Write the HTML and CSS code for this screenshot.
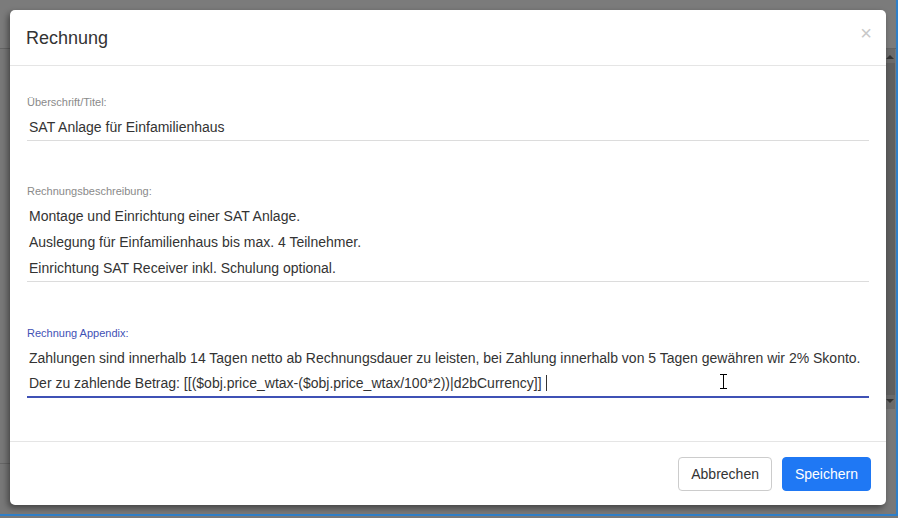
FILE: index.html
```html
<!DOCTYPE html>
<html lang="de">
<head>
<meta charset="utf-8">
<title>Rechnung</title>
<link rel="stylesheet" href="styles.css">
</head>
<body>
<div class="page">
  <div class="page-top"></div>
  <div class="page-main">
    <div class="page-content"></div>
    <div class="scrollbar">
      <div class="sb-arrow sb-up"></div>
      <div class="sb-thumb"></div>
      <div class="sb-arrow sb-down"></div>
    </div>
  </div>
</div>

<div class="modal">
  <div class="modal-header">
    <h4 class="modal-title">Rechnung</h4>
    <span class="close">&times;</span>
  </div>
  <div class="modal-body">
    <div class="field">
      <label class="field-label">Überschrift/Titel:</label>
      <div class="field-input">
        <div class="line">SAT Anlage für Einfamilienhaus</div>
      </div>
    </div>
    <div class="field">
      <label class="field-label">Rechnungsbeschreibung:</label>
      <div class="field-input">
        <div class="line">Montage und Einrichtung einer SAT Anlage.</div>
        <div class="line">Auslegung für Einfamilienhaus bis max. 4 Teilnehmer.</div>
        <div class="line">Einrichtung SAT Receiver inkl. Schulung optional.</div>
      </div>
    </div>
    <div class="field focused">
      <label class="field-label">Rechnung Appendix:</label>
      <div class="field-input">
        <div class="line">Zahlungen sind innerhalb 14 Tagen netto ab Rechnungsdauer zu leisten, bei Zahlung innerhalb von 5 Tagen gewähren wir 2% Skonto.</div>
        <div class="line">Der zu zahlende Betrag: [[($obj.price_wtax-($obj.price_wtax/100*2))|d2bCurrency]]<span class="caret"></span></div>
      </div>
      <svg class="ibeam" width="9" height="15" viewBox="0 0 9 15"><path d="M1 0.5h7M4.5 0.5v14M1 14.5h7" stroke="#000" stroke-width="1" fill="none"/></svg>
    </div>
  </div>
  <div class="modal-footer">
    <button class="btn btn-default">Abbrechen</button>
    <button class="btn btn-primary">Speichern</button>
  </div>
</div>
</body>
</html>
```
FILE: styles.css
```css
html, body {
  margin: 0;
  padding: 0;
}
body {
  width: 898px;
  height: 518px;
  overflow: hidden;
  background: #787878;
  font-family: "Liberation Sans", Arial, sans-serif;
  position: relative;
}
.page {
  height: 516px;
  border-bottom: 2px solid #2f7fc8;
  border-right: 2px solid #2f7fc8;
  box-sizing: border-box;
  display: flex;
  flex-direction: column;
}
.page-top {
  height: 48px;
  border-bottom: 1px solid #656565;
  background: #7b7b7b;
  flex: none;
}
.page-main {
  flex: 1;
  display: flex;
}
.page-content {
  flex: 1;
  border-bottom: 1px solid #666;
  margin-bottom: 50px;
}
.scrollbar {
  width: 10px;
  margin-right: 1px;
  display: flex;
  flex-direction: column;
  align-items: center;
  background: #6a6a6a;
  height: 360px;
}
.sb-arrow {
  width: 0;
  height: 0;
  border-left: 4px solid transparent;
  border-right: 4px solid transparent;
  margin: 6px 0 4px;
}
.sb-up { border-bottom: 4px solid #333; }
.sb-down { border-top: 4px solid #333; margin: 4px 0 6px; }
.sb-thumb {
  flex: 1;
  width: 9px;
  background: #5f5f5f;
}

.modal {
  position: absolute;
  left: 10px;
  top: 10px;
  width: 876px;
  height: 495px;
  background: #fff;
  border-radius: 5px;
  box-shadow: -2px 3px 6px rgba(0, 0, 0, 0.45);
  display: flex;
  flex-direction: column;
}
.modal-header {
  height: 55px;
  flex: none;
  border-bottom: 1px solid #e5e5e5;
  display: flex;
  align-items: center;
  justify-content: space-between;
  padding: 0 14px 0 16px;
}
.modal-title {
  margin: 0;
  font-size: 18px;
  font-weight: normal;
  color: #333;
  padding-top: 1px;
}
.close {
  font-size: 20px;
  color: #c8c8c8;
  line-height: 1;
  margin-top: -10px;
}
.modal-body {
  flex: 1;
  padding: 30px 17px 0;
  display: flex;
  flex-direction: column;
  gap: 44px;
}
.field {
  display: flex;
  flex-direction: column;
  gap: 5px;
  position: relative;
}
.field-label {
  font-size: 11px;
  line-height: 13px;
  color: #8a8a8a;
}
.field-input {
  border-bottom: 1px solid #dcdcdc;
  padding-left: 2px;
}
.line {
  font-size: 14px;
  line-height: 26px;
  color: #333;
  white-space: nowrap;
}
.focused {
  margin-top: 1px;
}
.focused .field-label {
  color: #3f51b5;
}
.focused .field-input {
  border-bottom: 2px solid #3f51b5;
  margin-bottom: -1px;
  padding-top: 1px;
}
.focused .line {
  line-height: 25px;
}
.caret {
  display: inline-block;
  width: 0;
  height: 16px;
  border-left: 1px solid #333;
  margin-left: 4px;
  vertical-align: -3px;
}
.ibeam {
  position: absolute;
  left: 692px;
  top: 47px;
}
.modal-footer {
  height: 64px;
  flex: none;
  border-top: 1px solid #e5e5e5;
  display: flex;
  align-items: center;
  justify-content: flex-end;
  gap: 10px;
  padding: 0 15px;
  box-sizing: border-box;
}
.btn {
  font-family: "Liberation Sans", Arial, sans-serif;
  font-size: 14px;
  height: 34px;
  padding: 0 12px;
  border-radius: 4px;
  border: 1px solid transparent;
  cursor: pointer;
}
.btn-default {
  background: #fff;
  border-color: #ccc;
  color: #333;
}
.btn-primary {
  background: #1f78f4;
  border-color: #1f78f4;
  color: #fff;
}
```
